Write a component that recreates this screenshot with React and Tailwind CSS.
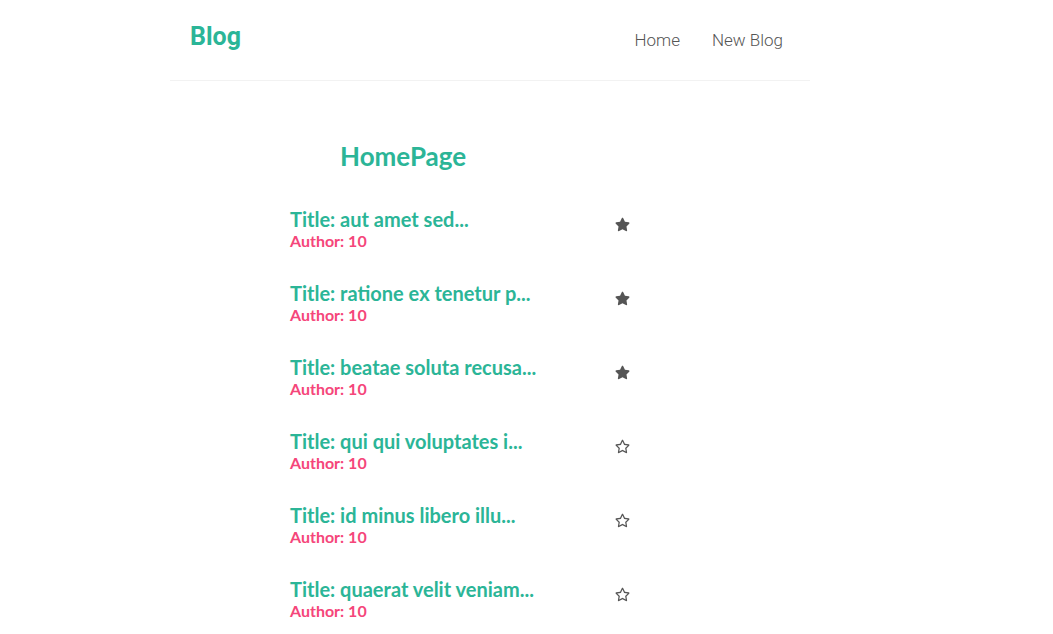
import { FaStar, FaRegStar } from "react-icons/fa";

const blogs = [
  { title: "aut amet sed", fav: true },
  { title: "ratione ex tenetur p", fav: true },
  { title: "beatae soluta recusa", fav: true },
  { title: "qui qui voluptates i", fav: false },
  { title: "id minus libero illu", fav: false },
  { title: "quaerat velit veniam", fav: false },
];

export default function App() {
  return (
    <div className="min-h-screen bg-white font-['Lato',sans-serif]">
      <nav className="ml-[170px] w-[640px] h-[81px] pl-5 pr-[27px] flex items-start justify-between border-b border-[#f2f2f2]">
        <h1 className="mt-[21px] text-[25px] leading-[32px] font-bold text-[#2bb597] font-['Roboto',sans-serif]">
          Blog
        </h1>
        <div className="mt-[28px] flex gap-8 text-[17px] leading-6 font-light text-[#555] font-['Roboto',sans-serif]">
          <a href="#">Home</a>
          <a href="#">New Blog</a>
        </div>
      </nav>

      <div className="ml-[290px] w-[345px] pt-[59px]">
        <h2 className="ml-[50px] text-[26px] leading-8 font-bold text-[#2bb597]">HomePage</h2>
        <div className="mt-[35px]">
          {blogs.map((b, i) => (
            <div key={i} className="h-[74px] flex items-start justify-between">
              <div>
                <h3 className="text-[20px] leading-6 font-bold text-[#2bb597]">
                  Title: {b.title}...
                </h3>
                <p className="text-[16px] leading-5 font-bold text-[#f5467a]">Author: 10</p>
              </div>
              <span className="mt-[10px] mr-[5px] text-[#555]">
                {b.fav ? <FaStar size={15} /> : <FaRegStar size={15} />}
              </span>
            </div>
          ))}
        </div>
      </div>
    </div>
  );
}
